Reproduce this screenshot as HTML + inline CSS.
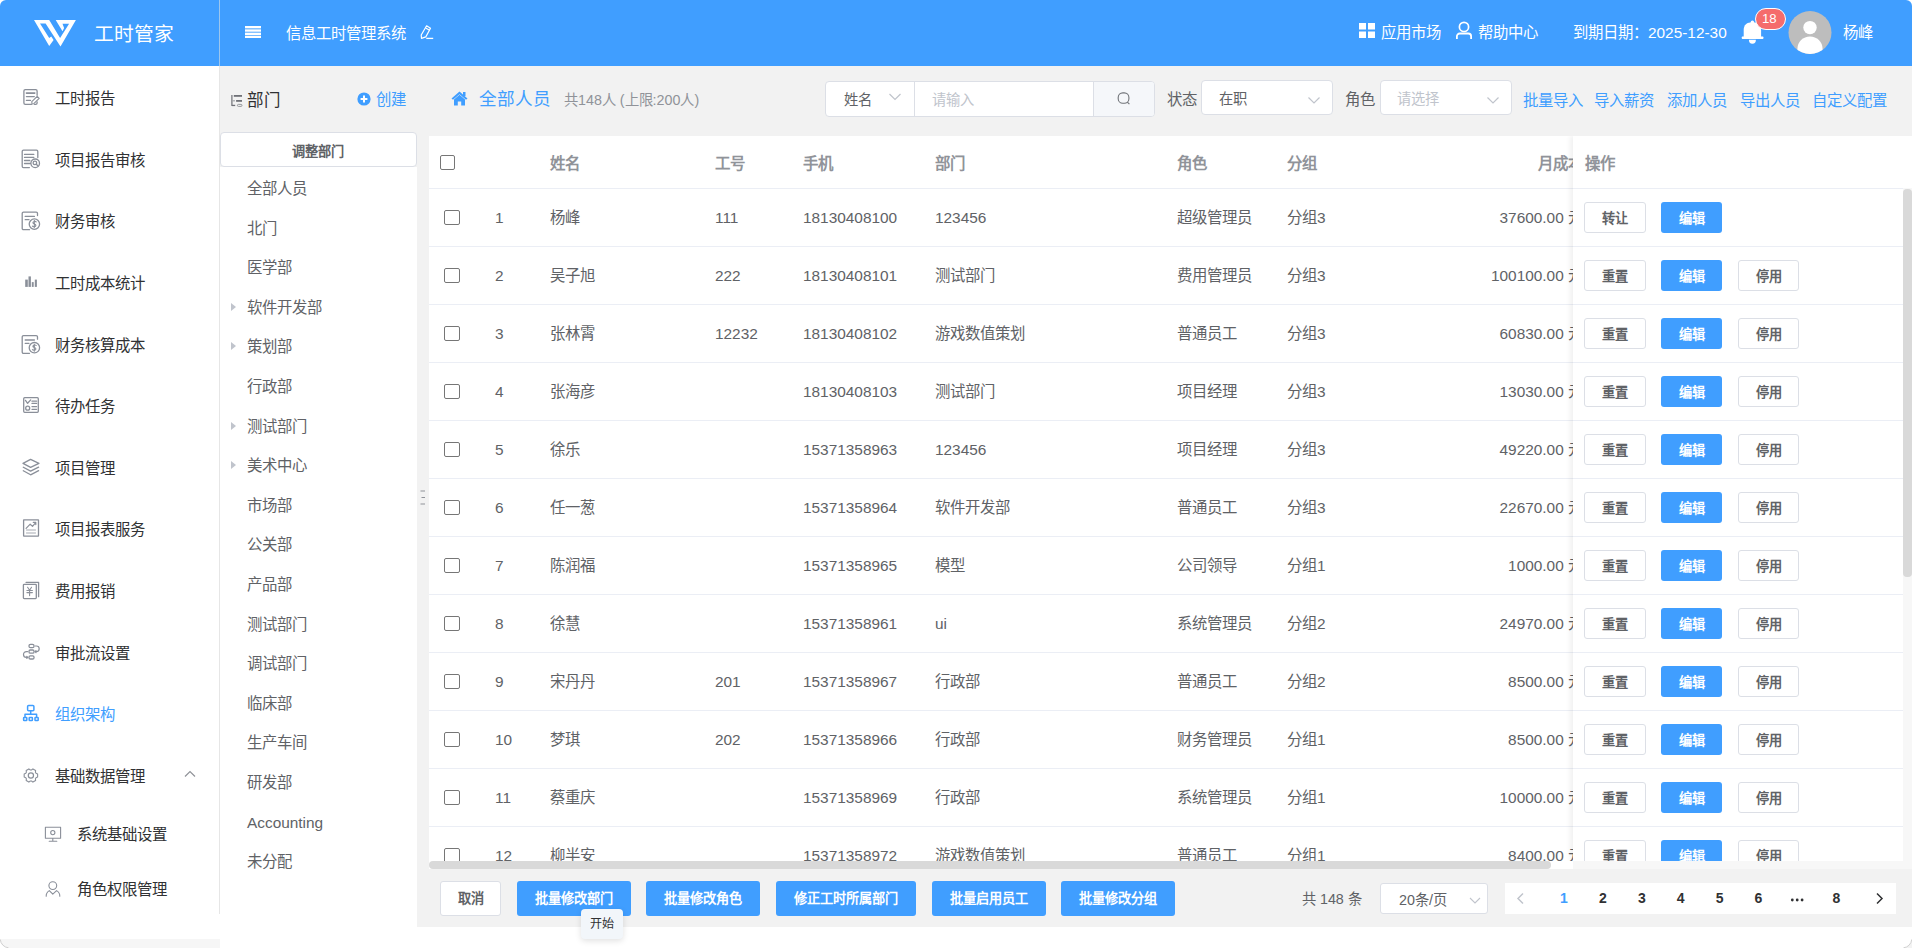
<!DOCTYPE html><html lang="zh-CN"><head><meta charset="utf-8"><title>工时管家</title><style>
*{box-sizing:border-box;margin:0;padding:0}
html,body{width:1912px;height:948px;overflow:hidden;background:#fff}
body{position:relative;font-family:"Liberation Sans",sans-serif;}
.t{position:absolute;white-space:nowrap}
.a{position:absolute}
</style></head><body>
<div class="a" style="left:0;top:0;width:1912px;height:66px;background:#409eff;border-radius:6px 6px 0 0"></div>
<svg class="a" style="left:0;top:0" width="100" height="66" viewBox="0 0 100 66"><g fill="#fff">
<path d="M34 20 L49.2 20 L60.1 38 L60.5 46.5 L45.6 23.6 L40 23.6 L49.2 38 L51.2 36.4 L53.6 40 L49.2 46.1 Z M55.7 20 L75.9 20 L60.5 46.5 L59.2 44 L60.1 38 L69.1 23.8 L62.5 23.8 L64.1 28 L62.5 31.2 Z"/>
</g></svg>
<div class="t" style="left:94px;top:25px;font-size:19.8px;line-height:19.8px;color:#fff;">工时管家</div>
<div class="a" style="left:219px;top:0;width:1px;height:66px;background:#9cc6ee"></div>
<svg class="a" style="left:245px;top:25px" width="16" height="14" viewBox="0 0 16 14"><rect x="0" y="1" width="16" height="12" fill="rgba(255,255,255,.3)"/><g fill="#fff"><rect x="0" y="1" width="16" height="2.1"/><rect x="0" y="4.5" width="16" height="2.1"/><rect x="0" y="7.9" width="16" height="2.1"/><rect x="0" y="11" width="16" height="2"/></g></svg>
<div class="t" style="left:286px;top:26px;font-size:15.4px;line-height:15.4px;color:#fff;">信息工时管理系统</div>
<svg class="a" style="left:410px;top:18px" width="30" height="28" viewBox="410 18 30 28"><g fill="none" stroke="#fff" stroke-width="1.2" stroke-linejoin="round"><path d="M426.6 25.8 L430.5 28.2 L425.8 36.9 L421.5 38.4 L421.2 35 Z"/><path d="M425.6 28 L429.6 30.2"/><path d="M426.3 38.4 H433.2" stroke-width="1.3"/></g></svg>
<svg class="a" style="left:1359px;top:23px" width="16" height="16" viewBox="0 0 16 16"><g fill="#fff">
<rect x="0" y="0" width="7" height="6.5"/><rect x="9" y="0" width="7" height="6.5"/><rect x="0" y="8.5" width="7" height="6.5"/><rect x="9" y="8.5" width="7" height="6.5"/></g></svg>
<div class="t" style="left:1381px;top:25px;font-size:15.4px;line-height:15.4px;color:#fff;">应用市场</div>
<svg class="a" style="left:1455px;top:21px" width="18" height="19" viewBox="0 0 18 19"><g fill="none" stroke="#fff" stroke-width="1.5">
<circle cx="9" cy="5.9" r="4.6" stroke-width="1.7"/><path d="M1.9 18 V15.3 A2.8 2.8 0 0 1 4.7 12.5 H13.3 A2.8 2.8 0 0 1 16.1 15.3 V18" stroke-width="1.8"/></g></svg>
<div class="t" style="left:1478px;top:25px;font-size:15.4px;line-height:15.4px;color:#fff;">帮助中心</div>
<div class="t" style="left:1573px;top:25px;font-size:15.4px;line-height:15.4px;color:#fff;">到期日期：2025-12-30</div>
<svg class="a" style="left:1740px;top:19px" width="25" height="26" viewBox="0 0 25 26"><g fill="#fff">
<circle cx="12.4" cy="3.3" r="1.7"/>
<path d="M3.7 18 V11 C3.7 6 6.8 3.3 12.4 3.3 C18 3.3 21.1 6 21.1 11 V18 Z"/>
<rect x="1.8" y="17.6" width="21.6" height="2.3" rx="0.6"/>
<path d="M8.9 20.8 H15.9 A3.5 3.9 0 0 1 8.9 20.8 Z"/></g></svg>
<div class="a" style="left:1755px;top:8px;width:31px;height:22px;border-radius:11px;background:#f56c6c;border:1px solid #fff"></div>
<div class="t" style="left:1762px;top:12px;font-size:13.2px;line-height:13.2px;color:#fff;">18</div>
<svg class="a" style="left:1788px;top:11px" width="44" height="44" viewBox="0 0 44 44">
<defs><clipPath id="av"><circle cx="22" cy="21.5" r="21.5"/></clipPath></defs>
<circle cx="22" cy="21.5" r="21.5" fill="#bdbdbd"/>
<g clip-path="url(#av)" fill="#fff"><circle cx="22" cy="16.6" r="6.7"/><ellipse cx="22" cy="38" rx="12.6" ry="12.6"/></g></svg>
<div class="t" style="left:1843px;top:25px;font-size:15.4px;line-height:15.4px;color:#fff;">杨峰</div>
<div class="a" style="left:0;top:66px;width:219px;height:848px;background:#fff"></div>
<div class="a" style="left:219px;top:66px;width:1px;height:848px;background:#e6e6e6"></div>
<div class="a" style="left:0;top:939px;width:220px;height:9px;background:#f6f6f6"></div>
<svg class="a" style="left:0;top:936px" width="12" height="12" viewBox="0 0 12 12"><path d="M0 0 V12 H9 A9 9 0 0 1 0 3 Z" fill="#fff"/><path d="M0.3 3.5 A9 9 0 0 0 8.5 11.8" fill="none" stroke="#d0d0d0" stroke-width="1"/></svg>
<div class="t" style="left:55px;top:91px;font-size:15.4px;line-height:15.4px;color:#303133;">工时报告</div>
<div class="t" style="left:55px;top:153px;font-size:15.4px;line-height:15.4px;color:#303133;">项目报告审核</div>
<div class="t" style="left:55px;top:214px;font-size:15.4px;line-height:15.4px;color:#303133;">财务审核</div>
<div class="t" style="left:55px;top:276px;font-size:15.4px;line-height:15.4px;color:#303133;">工时成本统计</div>
<div class="t" style="left:55px;top:338px;font-size:15.4px;line-height:15.4px;color:#303133;">财务核算成本</div>
<div class="t" style="left:55px;top:399px;font-size:15.4px;line-height:15.4px;color:#303133;">待办任务</div>
<div class="t" style="left:55px;top:461px;font-size:15.4px;line-height:15.4px;color:#303133;">项目管理</div>
<div class="t" style="left:55px;top:522px;font-size:15.4px;line-height:15.4px;color:#303133;">项目报表服务</div>
<div class="t" style="left:55px;top:584px;font-size:15.4px;line-height:15.4px;color:#303133;">费用报销</div>
<div class="t" style="left:55px;top:646px;font-size:15.4px;line-height:15.4px;color:#303133;">审批流设置</div>
<div class="t" style="left:55px;top:707px;font-size:15.4px;line-height:15.4px;color:#409eff;">组织架构</div>
<div class="t" style="left:55px;top:769px;font-size:15.4px;line-height:15.4px;color:#303133;">基础数据管理</div>
<svg class="a" style="left:0;top:0" width="219" height="948" viewBox="0 0 219 948"><g fill="none" stroke="#8a8f99" stroke-width="1.3" stroke-linecap="round" stroke-linejoin="round">
<path d="M37.1 95.3 V91 A1.4 1.4 0 0 0 35.7 89.6 H25.3 A1.4 1.4 0 0 0 23.9 91 V102.9 A1.4 1.4 0 0 0 25.3 104.3 H31.5 M37.1 101.8 V102.9 A1.4 1.4 0 0 1 35.7 104.3 H34.5"/>
<path d="M26.4 93.1 H34.8" stroke-width="1.6"/><path d="M26.4 96.6 H34.3"/><path d="M26.4 100.4 H30.5"/>
<path d="M32 104 L31.8 101.7 L37.2 96.3 L39.2 98.3 L33.8 103.7 Z" stroke-width="1.1"/>
<path d="M37.8 157.5 V151.5 A1.3 1.3 0 0 0 36.5 150.2 H23.5 A1.3 1.3 0 0 0 22.2 151.5 V166.3 A1.3 1.3 0 0 0 23.5 167.6 H29.4"/>
<path d="M24.5 154.4 H33.8 M24.5 157.4 H33.8 M24.5 160.5 H29.8 M24.5 163.5 H30.4"/>
<circle cx="35.2" cy="163.3" r="4.3"/><circle cx="34.9" cy="162.9" r="1.8"/><path d="M36.3 164.3 L37.8 165.8"/>
<path d="M37.5 215.6 V213.4 A1.3 1.3 0 0 0 36.2 212.1 H23.5 A1.3 1.3 0 0 0 22.2 213.4 V228.4 A1.3 1.3 0 0 0 23.5 229.7 H29.5"/>
<path d="M25.2 216.4 H34.4 M25.2 219.7 H29"/><circle cx="34.4" cy="224.1" r="5.2"/>
<path d="M36.2 221.9 C35.5 221.1 32.8 221.2 32.9 222.8 C33 224.2 36 223.7 35.9 225.4 C35.8 227 33.1 227 32.4 226.1 M34.3 220.6 V227.6" stroke-width="1.1"/>
<path d="M37.5 339.2 V337 A1.3 1.3 0 0 0 36.2 335.7 H23.5 A1.3 1.3 0 0 0 22.2 337 V352 A1.3 1.3 0 0 0 23.5 353.3 H29.5"/>
<path d="M25.2 340 H34.4 M25.2 343.3 H29"/><circle cx="34.4" cy="347.7" r="5.2"/>
<path d="M36.2 345.5 C35.5 344.7 32.8 344.8 32.9 346.4 C33 347.8 36 347.3 35.9 349 C35.8 350.6 33.1 350.6 32.4 349.7 M34.3 344.2 V351.2" stroke-width="1.1"/>
<rect x="23.7" y="397.7" width="14.6" height="14.6" rx="1"/>
<path d="M25.5 400.4 L27.6 403.3 L30.7 399.9"/><circle cx="27.7" cy="408.2" r="2"/>
<path d="M32 401.2 H36.6 M32 403.4 H36.6 M32 406.6 H36.6 M32 409.3 H36.6"/>
<path d="M30.6 459.4 L38.9 463.4 L30.6 467.4 L23 463.4 Z"/><path d="M23.3 467.2 L30.6 471.1 L38.6 467.2 M23.3 470.7 L30.6 474.8 L38.6 470.7"/>
<rect x="23.6" y="519.8" width="14.9" height="16.3" rx="0.3" stroke-linejoin="miter"/>
<path d="M26.1 528.4 L30.2 524.2 L32.5 526.4 L35.7 522.6 M33.3 522.4 H35.8 V524.6" stroke-width="1.2"/>
<path d="M26.1 529.9 H35.9 M26.1 532.9 H35.9" stroke="#c3c6cb" stroke-width="1.5" stroke-linecap="butt"/>
<path d="M26.1 582.4 H38.6 V596.7"/><rect x="23.4" y="584.3" width="12.9" height="14.3" rx="0.8"/>
<path d="M27.6 587.3 L29.6 590.2 L31.5 587.3 M26.9 590.5 H32.4 M26.9 592.6 H32.4 M29.6 590.2 V595.6" stroke-width="1.1"/>
<rect x="29" y="644.3" width="5" height="3.4" rx="1.5"/><rect x="29" y="650" width="5" height="3.2" rx="1.3"/><rect x="29" y="655.8" width="5" height="3.2" rx="1.3"/>
<path d="M35.3 646 H36.4 A2.8 2.8 0 0 1 36.4 651.6 H35 M36 650.6 L35 651.6 L36 652.6" stroke-width="1.2"/>
<path d="M27.6 651.6 H26.4 A2.9 2.9 0 0 0 26.4 657.4 H27.6 M26.8 656.4 L27.8 657.4 L26.8 658.4" stroke-width="1.2"/>
<circle cx="30.9" cy="775.5" r="2.6" stroke-width="1.2"/>
<path d="M36.02 773.22 L37.62 773.95 L37.62 777.05 L36.02 777.78 L35.43 778.79 L35.61 780.55 L32.92 782.10 L31.49 781.07 L30.31 781.07 L28.88 782.10 L26.19 780.55 L26.37 778.79 L25.78 777.78 L24.18 777.05 L24.18 773.95 L25.78 773.22 L26.37 772.21 L26.19 770.45 L28.88 768.90 L30.31 769.93 L31.49 769.93 L32.92 768.90 L35.61 770.45 L35.43 772.21 Z" stroke-width="1.1"/>
<path d="M45.4 827.3 H60.6 V838.2 H45.4 Z M52.8 838.2 V841.2 M49.2 841.3 H56.8" stroke-width="1.1"/>
<circle cx="52.8" cy="832.6" r="2.1" stroke-width="1.1"/>
<circle cx="52.8" cy="885.6" r="3.9" stroke-width="1.1"/>
<path d="M46.2 896.3 A7.2 6.5 0 0 1 49.3 890.6 L52.8 894.2 L56.6 890.6 A7.2 6.5 0 0 1 59.8 896.3" stroke-width="1.1"/>
</g>
<g fill="#8a8f99"><rect x="25.2" y="279.6" width="2.6" height="7.3"/><rect x="28.5" y="276.4" width="2.4" height="10.5"/><rect x="31.8" y="282.1" width="1.9" height="4.8"/><rect x="34.8" y="279.6" width="2.1" height="7.3"/></g>
<g fill="none" stroke="#409eff" stroke-width="1.5" stroke-linejoin="round">
<rect x="27.6" y="705.5" width="6.3" height="5.2" rx="1"/><path d="M30.7 710.7 V714.3 M25 717.4 V714.3 H36.6 V717.4"/>
<rect x="23.6" y="717.5" width="3.2" height="3" rx="0.6"/><rect x="29.2" y="717.5" width="3.2" height="3" rx="0.6"/><rect x="35" y="717.5" width="3.2" height="3" rx="0.6"/>
</g></svg>
<svg class="a" style="left:184px;top:770px" width="12" height="8" viewBox="0 0 12 8"><path d="M1 6.5 L6 1.5 L11 6.5" fill="none" stroke="#909399" stroke-width="1.2"/></svg>
<div class="t" style="left:77px;top:827px;font-size:15.4px;line-height:15.4px;color:#303133;">系统基础设置</div>
<div class="t" style="left:77px;top:882px;font-size:15.4px;line-height:15.4px;color:#303133;">角色权限管理</div>
<div class="a" style="left:220px;top:66px;width:1692px;height:861px;background:#f2f2f2"></div>
<svg class="a" style="left:226px;top:88px" width="20" height="22" viewBox="226 88 20 22"><g fill="#6f7177"><rect x="231.3" y="95" width="1.2" height="11"/><rect x="233.8" y="95" width="8.2" height="1.8"/><rect x="236.1" y="100" width="5.9" height="1.8"/><rect x="232" y="100.2" width="3" height="1.2" fill="#a5a7ab"/><rect x="232" y="104.8" width="3.2" height="1.3"/></g><rect x="237.4" y="104.4" width="4.6" height="2" rx="1" fill="none" stroke="#8c8e93" stroke-width="0.9"/></svg>
<div class="t" style="left:247px;top:92px;font-size:16.5px;line-height:16.5px;color:#303133;">部门</div>
<svg class="a" style="left:357px;top:92px" width="14" height="14" viewBox="0 0 14 14"><circle cx="7" cy="7" r="6.6" fill="#409eff"/><path d="M7 3.6 V10.4 M3.6 7 H10.4" stroke="#fff" stroke-width="2"/></svg>
<div class="t" style="left:376px;top:92px;font-size:15.4px;line-height:15.4px;color:#409eff;">创建</div>
<div class="a" style="left:220px;top:132px;width:197px;height:35px;background:#fff;border:1px solid #dcdfe6;border-radius:4px"></div>
<div class="t" style="left:292px;top:145px;font-size:13.2px;line-height:13.2px;color:#606266;font-weight:bold;">调整部门</div>
<div class="a" style="left:220px;top:167px;width:197px;height:781px;background:#fff"></div>
<div class="t" style="left:247px;top:181px;font-size:15.4px;line-height:15.4px;color:#606266;">全部人员</div>
<div class="t" style="left:247px;top:221px;font-size:15.4px;line-height:15.4px;color:#606266;">北门</div>
<div class="t" style="left:247px;top:260px;font-size:15.4px;line-height:15.4px;color:#606266;">医学部</div>
<div class="t" style="left:247px;top:300px;font-size:15.4px;line-height:15.4px;color:#606266;">软件开发部</div>
<div class="a" style="left:231px;top:303px;width:0;height:0;border-top:4px solid transparent;border-bottom:4px solid transparent;border-left:5px solid #c0c4cc"></div>
<div class="t" style="left:247px;top:339px;font-size:15.4px;line-height:15.4px;color:#606266;">策划部</div>
<div class="a" style="left:231px;top:342px;width:0;height:0;border-top:4px solid transparent;border-bottom:4px solid transparent;border-left:5px solid #c0c4cc"></div>
<div class="t" style="left:247px;top:379px;font-size:15.4px;line-height:15.4px;color:#606266;">行政部</div>
<div class="t" style="left:247px;top:419px;font-size:15.4px;line-height:15.4px;color:#606266;">测试部门</div>
<div class="a" style="left:231px;top:422px;width:0;height:0;border-top:4px solid transparent;border-bottom:4px solid transparent;border-left:5px solid #c0c4cc"></div>
<div class="t" style="left:247px;top:458px;font-size:15.4px;line-height:15.4px;color:#606266;">美术中心</div>
<div class="a" style="left:231px;top:461px;width:0;height:0;border-top:4px solid transparent;border-bottom:4px solid transparent;border-left:5px solid #c0c4cc"></div>
<div class="t" style="left:247px;top:498px;font-size:15.4px;line-height:15.4px;color:#606266;">市场部</div>
<div class="t" style="left:247px;top:537px;font-size:15.4px;line-height:15.4px;color:#606266;">公关部</div>
<div class="t" style="left:247px;top:577px;font-size:15.4px;line-height:15.4px;color:#606266;">产品部</div>
<div class="t" style="left:247px;top:617px;font-size:15.4px;line-height:15.4px;color:#606266;">测试部门</div>
<div class="t" style="left:247px;top:656px;font-size:15.4px;line-height:15.4px;color:#606266;">调试部门</div>
<div class="t" style="left:247px;top:696px;font-size:15.4px;line-height:15.4px;color:#606266;">临床部</div>
<div class="t" style="left:247px;top:735px;font-size:15.4px;line-height:15.4px;color:#606266;">生产车间</div>
<div class="t" style="left:247px;top:775px;font-size:15.4px;line-height:15.4px;color:#606266;">研发部</div>
<div class="t" style="left:247px;top:815px;font-size:15.4px;line-height:15.4px;color:#606266;">Accounting</div>
<div class="t" style="left:247px;top:854px;font-size:15.4px;line-height:15.4px;color:#606266;">未分配</div>
<svg class="a" style="left:420px;top:490px" width="6" height="15" viewBox="0 0 6 15"><path d="M0.5 1 H5 M1.5 7.5 H5 M0.5 14 H5" stroke="#909399" stroke-width="1"/></svg>
<svg class="a" style="left:451px;top:91px" width="17" height="15" viewBox="0 0 17 15"><g fill="#409eff"><path d="M8.5 0.5 L0.5 7.5 L2 8.8 L8.5 3.2 L15 8.8 L16.5 7.5 Z"/><rect x="12" y="1" width="2.5" height="4"/><path d="M3 8.5 L8.5 3.8 L14 8.5 V14.5 H10.2 V10.5 H6.8 V14.5 H3 Z"/></g></svg>
<div class="t" style="left:479px;top:91px;font-size:17.6px;line-height:17.6px;color:#409eff;">全部人员</div>
<div class="t" style="left:564px;top:93px;font-size:14.3px;line-height:14.3px;color:#909399;">共148人 (上限:200人)</div>
<div class="a" style="left:825px;top:81px;width:330px;height:36px;background:#fff;border:1px solid #dcdfe6;border-radius:4px"></div>
<div class="a" style="left:1093px;top:82px;width:61px;height:34px;background:#f5f7fa;border-left:1px solid #dcdfe6;border-radius:0 3px 3px 0"></div>
<div class="a" style="left:914px;top:82px;width:1px;height:34px;background:#dcdfe6"></div>
<div class="t" style="left:844px;top:93px;font-size:14.3px;line-height:14.3px;color:#606266;">姓名</div>
<svg class="a" style="left:888px;top:92px" width="14" height="10" viewBox="0 0 14 10"><path d="M1.5 2 L7 7.5 L12.5 2" fill="none" stroke="#c0c4cc" stroke-width="1.2"/></svg>
<div class="t" style="left:932px;top:93px;font-size:14.3px;line-height:14.3px;color:#c0c4cc;">请输入</div>
<svg class="a" style="left:1110px;top:85px" width="25" height="25" viewBox="1110 85 25 25"><g fill="none" stroke="#707378" stroke-width="1.1"><rect x="1118.2" y="92.9" width="10.7" height="10.4" rx="4.6"/><path d="M1127.3 102.1 L1129.4 104.2"/></g></svg>
<div class="t" style="left:1167px;top:92px;font-size:15.4px;line-height:15.4px;color:#606266;">状态</div>
<div class="a" style="left:1201px;top:80px;width:132px;height:35px;background:#fff;border:1px solid #dcdfe6;border-radius:4px"></div>
<div class="t" style="left:1219px;top:92px;font-size:14.3px;line-height:14.3px;color:#606266;">在职</div>
<svg class="a" style="left:1307px;top:95px" width="14" height="10" viewBox="0 0 14 10"><path d="M1.5 2.5 L7 8 L12.5 2.5" fill="none" stroke="#c0c4cc" stroke-width="1.2"/></svg>
<div class="t" style="left:1345px;top:92px;font-size:15.4px;line-height:15.4px;color:#606266;">角色</div>
<div class="a" style="left:1380px;top:80px;width:132px;height:35px;background:#fff;border:1px solid #dcdfe6;border-radius:4px"></div>
<div class="t" style="left:1397px;top:92px;font-size:14.3px;line-height:14.3px;color:#c0c4cc;">请选择</div>
<svg class="a" style="left:1486px;top:95px" width="14" height="10" viewBox="0 0 14 10"><path d="M1.5 2.5 L7 8 L12.5 2.5" fill="none" stroke="#c0c4cc" stroke-width="1.2"/></svg>
<div class="t" style="left:1523px;top:93px;font-size:15.4px;line-height:15.4px;color:#409eff;">批量导入</div>
<div class="t" style="left:1594px;top:93px;font-size:15.4px;line-height:15.4px;color:#409eff;">导入薪资</div>
<div class="t" style="left:1667px;top:93px;font-size:15.4px;line-height:15.4px;color:#409eff;">添加人员</div>
<div class="t" style="left:1740px;top:93px;font-size:15.4px;line-height:15.4px;color:#409eff;">导出人员</div>
<div class="t" style="left:1812px;top:93px;font-size:15.4px;line-height:15.4px;color:#409eff;">自定义配置</div>
<div class="a" style="left:429px;top:136px;width:1483px;height:733px;background:#fff;overflow:hidden">
<div class="a" style="left:11px;top:19px;width:15px;height:15px;border:1px solid #767676;border-radius:2px;background:#fff"></div>
<div class="t" style="left:121px;top:20px;font-size:15.4px;line-height:15.4px;color:#909399;font-weight:bold;">姓名</div>
<div class="t" style="left:286px;top:20px;font-size:15.4px;line-height:15.4px;color:#909399;font-weight:bold;">工号</div>
<div class="t" style="left:374px;top:20px;font-size:15.4px;line-height:15.4px;color:#909399;font-weight:bold;">手机</div>
<div class="t" style="left:506px;top:20px;font-size:15.4px;line-height:15.4px;color:#909399;font-weight:bold;">部门</div>
<div class="t" style="left:748px;top:20px;font-size:15.4px;line-height:15.4px;color:#909399;font-weight:bold;">角色</div>
<div class="t" style="left:858px;top:20px;font-size:15.4px;line-height:15.4px;color:#909399;font-weight:bold;">分组</div>
<div class="t" style="left:1109px;top:20px;font-size:15.4px;line-height:15.4px;color:#909399;font-weight:bold;">月成本</div>
<div class="a" style="left:0;top:52px;width:1483px;height:1px;background:#ebeef5"></div>
<div class="a" style="left:15px;top:74px;width:16px;height:15px;border:1px solid #767676;border-radius:2px;background:#fff"></div>
<div class="t" style="left:66px;top:74px;font-size:15.4px;line-height:15.4px;color:#606266;">1</div>
<div class="t" style="left:121px;top:74px;font-size:15.4px;line-height:15.4px;color:#606266;">杨峰</div>
<div class="t" style="left:286px;top:74px;font-size:15.4px;line-height:15.4px;color:#606266;">111</div>
<div class="t" style="left:374px;top:74px;font-size:15.4px;line-height:15.4px;color:#606266;">18130408100</div>
<div class="t" style="left:506px;top:74px;font-size:15.4px;line-height:15.4px;color:#606266;">123456</div>
<div class="t" style="left:748px;top:74px;font-size:15.4px;line-height:15.4px;color:#606266;">超级管理员</div>
<div class="t" style="left:858px;top:74px;font-size:15.4px;line-height:15.4px;color:#606266;">分组3</div>
<div class="t" style="right:329px;top:74px;font-size:15.4px;line-height:15.4px;color:#606266">37600.00 元</div>
<div class="a" style="left:0;top:110px;width:1483px;height:1px;background:#ebeef5"></div>
<div class="a" style="left:15px;top:132px;width:16px;height:15px;border:1px solid #767676;border-radius:2px;background:#fff"></div>
<div class="t" style="left:66px;top:132px;font-size:15.4px;line-height:15.4px;color:#606266;">2</div>
<div class="t" style="left:121px;top:132px;font-size:15.4px;line-height:15.4px;color:#606266;">吴子旭</div>
<div class="t" style="left:286px;top:132px;font-size:15.4px;line-height:15.4px;color:#606266;">222</div>
<div class="t" style="left:374px;top:132px;font-size:15.4px;line-height:15.4px;color:#606266;">18130408101</div>
<div class="t" style="left:506px;top:132px;font-size:15.4px;line-height:15.4px;color:#606266;">测试部门</div>
<div class="t" style="left:748px;top:132px;font-size:15.4px;line-height:15.4px;color:#606266;">费用管理员</div>
<div class="t" style="left:858px;top:132px;font-size:15.4px;line-height:15.4px;color:#606266;">分组3</div>
<div class="t" style="right:329px;top:132px;font-size:15.4px;line-height:15.4px;color:#606266">100100.00 元</div>
<div class="a" style="left:0;top:168px;width:1483px;height:1px;background:#ebeef5"></div>
<div class="a" style="left:15px;top:190px;width:16px;height:15px;border:1px solid #767676;border-radius:2px;background:#fff"></div>
<div class="t" style="left:66px;top:190px;font-size:15.4px;line-height:15.4px;color:#606266;">3</div>
<div class="t" style="left:121px;top:190px;font-size:15.4px;line-height:15.4px;color:#606266;">张林霄</div>
<div class="t" style="left:286px;top:190px;font-size:15.4px;line-height:15.4px;color:#606266;">12232</div>
<div class="t" style="left:374px;top:190px;font-size:15.4px;line-height:15.4px;color:#606266;">18130408102</div>
<div class="t" style="left:506px;top:190px;font-size:15.4px;line-height:15.4px;color:#606266;">游戏数值策划</div>
<div class="t" style="left:748px;top:190px;font-size:15.4px;line-height:15.4px;color:#606266;">普通员工</div>
<div class="t" style="left:858px;top:190px;font-size:15.4px;line-height:15.4px;color:#606266;">分组3</div>
<div class="t" style="right:329px;top:190px;font-size:15.4px;line-height:15.4px;color:#606266">60830.00 元</div>
<div class="a" style="left:0;top:226px;width:1483px;height:1px;background:#ebeef5"></div>
<div class="a" style="left:15px;top:248px;width:16px;height:15px;border:1px solid #767676;border-radius:2px;background:#fff"></div>
<div class="t" style="left:66px;top:248px;font-size:15.4px;line-height:15.4px;color:#606266;">4</div>
<div class="t" style="left:121px;top:248px;font-size:15.4px;line-height:15.4px;color:#606266;">张海彦</div>
<div class="t" style="left:286px;top:248px;font-size:15.4px;line-height:15.4px;color:#606266;"></div>
<div class="t" style="left:374px;top:248px;font-size:15.4px;line-height:15.4px;color:#606266;">18130408103</div>
<div class="t" style="left:506px;top:248px;font-size:15.4px;line-height:15.4px;color:#606266;">测试部门</div>
<div class="t" style="left:748px;top:248px;font-size:15.4px;line-height:15.4px;color:#606266;">项目经理</div>
<div class="t" style="left:858px;top:248px;font-size:15.4px;line-height:15.4px;color:#606266;">分组3</div>
<div class="t" style="right:329px;top:248px;font-size:15.4px;line-height:15.4px;color:#606266">13030.00 元</div>
<div class="a" style="left:0;top:284px;width:1483px;height:1px;background:#ebeef5"></div>
<div class="a" style="left:15px;top:306px;width:16px;height:15px;border:1px solid #767676;border-radius:2px;background:#fff"></div>
<div class="t" style="left:66px;top:306px;font-size:15.4px;line-height:15.4px;color:#606266;">5</div>
<div class="t" style="left:121px;top:306px;font-size:15.4px;line-height:15.4px;color:#606266;">徐乐</div>
<div class="t" style="left:286px;top:306px;font-size:15.4px;line-height:15.4px;color:#606266;"></div>
<div class="t" style="left:374px;top:306px;font-size:15.4px;line-height:15.4px;color:#606266;">15371358963</div>
<div class="t" style="left:506px;top:306px;font-size:15.4px;line-height:15.4px;color:#606266;">123456</div>
<div class="t" style="left:748px;top:306px;font-size:15.4px;line-height:15.4px;color:#606266;">项目经理</div>
<div class="t" style="left:858px;top:306px;font-size:15.4px;line-height:15.4px;color:#606266;">分组3</div>
<div class="t" style="right:329px;top:306px;font-size:15.4px;line-height:15.4px;color:#606266">49220.00 元</div>
<div class="a" style="left:0;top:342px;width:1483px;height:1px;background:#ebeef5"></div>
<div class="a" style="left:15px;top:364px;width:16px;height:15px;border:1px solid #767676;border-radius:2px;background:#fff"></div>
<div class="t" style="left:66px;top:364px;font-size:15.4px;line-height:15.4px;color:#606266;">6</div>
<div class="t" style="left:121px;top:364px;font-size:15.4px;line-height:15.4px;color:#606266;">任一葱</div>
<div class="t" style="left:286px;top:364px;font-size:15.4px;line-height:15.4px;color:#606266;"></div>
<div class="t" style="left:374px;top:364px;font-size:15.4px;line-height:15.4px;color:#606266;">15371358964</div>
<div class="t" style="left:506px;top:364px;font-size:15.4px;line-height:15.4px;color:#606266;">软件开发部</div>
<div class="t" style="left:748px;top:364px;font-size:15.4px;line-height:15.4px;color:#606266;">普通员工</div>
<div class="t" style="left:858px;top:364px;font-size:15.4px;line-height:15.4px;color:#606266;">分组3</div>
<div class="t" style="right:329px;top:364px;font-size:15.4px;line-height:15.4px;color:#606266">22670.00 元</div>
<div class="a" style="left:0;top:400px;width:1483px;height:1px;background:#ebeef5"></div>
<div class="a" style="left:15px;top:422px;width:16px;height:15px;border:1px solid #767676;border-radius:2px;background:#fff"></div>
<div class="t" style="left:66px;top:422px;font-size:15.4px;line-height:15.4px;color:#606266;">7</div>
<div class="t" style="left:121px;top:422px;font-size:15.4px;line-height:15.4px;color:#606266;">陈润福</div>
<div class="t" style="left:286px;top:422px;font-size:15.4px;line-height:15.4px;color:#606266;"></div>
<div class="t" style="left:374px;top:422px;font-size:15.4px;line-height:15.4px;color:#606266;">15371358965</div>
<div class="t" style="left:506px;top:422px;font-size:15.4px;line-height:15.4px;color:#606266;">模型</div>
<div class="t" style="left:748px;top:422px;font-size:15.4px;line-height:15.4px;color:#606266;">公司领导</div>
<div class="t" style="left:858px;top:422px;font-size:15.4px;line-height:15.4px;color:#606266;">分组1</div>
<div class="t" style="right:329px;top:422px;font-size:15.4px;line-height:15.4px;color:#606266">1000.00 元</div>
<div class="a" style="left:0;top:458px;width:1483px;height:1px;background:#ebeef5"></div>
<div class="a" style="left:15px;top:480px;width:16px;height:15px;border:1px solid #767676;border-radius:2px;background:#fff"></div>
<div class="t" style="left:66px;top:480px;font-size:15.4px;line-height:15.4px;color:#606266;">8</div>
<div class="t" style="left:121px;top:480px;font-size:15.4px;line-height:15.4px;color:#606266;">徐慧</div>
<div class="t" style="left:286px;top:480px;font-size:15.4px;line-height:15.4px;color:#606266;"></div>
<div class="t" style="left:374px;top:480px;font-size:15.4px;line-height:15.4px;color:#606266;">15371358961</div>
<div class="t" style="left:506px;top:480px;font-size:15.4px;line-height:15.4px;color:#606266;">ui</div>
<div class="t" style="left:748px;top:480px;font-size:15.4px;line-height:15.4px;color:#606266;">系统管理员</div>
<div class="t" style="left:858px;top:480px;font-size:15.4px;line-height:15.4px;color:#606266;">分组2</div>
<div class="t" style="right:329px;top:480px;font-size:15.4px;line-height:15.4px;color:#606266">24970.00 元</div>
<div class="a" style="left:0;top:516px;width:1483px;height:1px;background:#ebeef5"></div>
<div class="a" style="left:15px;top:538px;width:16px;height:15px;border:1px solid #767676;border-radius:2px;background:#fff"></div>
<div class="t" style="left:66px;top:538px;font-size:15.4px;line-height:15.4px;color:#606266;">9</div>
<div class="t" style="left:121px;top:538px;font-size:15.4px;line-height:15.4px;color:#606266;">宋丹丹</div>
<div class="t" style="left:286px;top:538px;font-size:15.4px;line-height:15.4px;color:#606266;">201</div>
<div class="t" style="left:374px;top:538px;font-size:15.4px;line-height:15.4px;color:#606266;">15371358967</div>
<div class="t" style="left:506px;top:538px;font-size:15.4px;line-height:15.4px;color:#606266;">行政部</div>
<div class="t" style="left:748px;top:538px;font-size:15.4px;line-height:15.4px;color:#606266;">普通员工</div>
<div class="t" style="left:858px;top:538px;font-size:15.4px;line-height:15.4px;color:#606266;">分组2</div>
<div class="t" style="right:329px;top:538px;font-size:15.4px;line-height:15.4px;color:#606266">8500.00 元</div>
<div class="a" style="left:0;top:574px;width:1483px;height:1px;background:#ebeef5"></div>
<div class="a" style="left:15px;top:596px;width:16px;height:15px;border:1px solid #767676;border-radius:2px;background:#fff"></div>
<div class="t" style="left:66px;top:596px;font-size:15.4px;line-height:15.4px;color:#606266;">10</div>
<div class="t" style="left:121px;top:596px;font-size:15.4px;line-height:15.4px;color:#606266;">梦琪</div>
<div class="t" style="left:286px;top:596px;font-size:15.4px;line-height:15.4px;color:#606266;">202</div>
<div class="t" style="left:374px;top:596px;font-size:15.4px;line-height:15.4px;color:#606266;">15371358966</div>
<div class="t" style="left:506px;top:596px;font-size:15.4px;line-height:15.4px;color:#606266;">行政部</div>
<div class="t" style="left:748px;top:596px;font-size:15.4px;line-height:15.4px;color:#606266;">财务管理员</div>
<div class="t" style="left:858px;top:596px;font-size:15.4px;line-height:15.4px;color:#606266;">分组1</div>
<div class="t" style="right:329px;top:596px;font-size:15.4px;line-height:15.4px;color:#606266">8500.00 元</div>
<div class="a" style="left:0;top:632px;width:1483px;height:1px;background:#ebeef5"></div>
<div class="a" style="left:15px;top:654px;width:16px;height:15px;border:1px solid #767676;border-radius:2px;background:#fff"></div>
<div class="t" style="left:66px;top:654px;font-size:15.4px;line-height:15.4px;color:#606266;">11</div>
<div class="t" style="left:121px;top:654px;font-size:15.4px;line-height:15.4px;color:#606266;">蔡重庆</div>
<div class="t" style="left:286px;top:654px;font-size:15.4px;line-height:15.4px;color:#606266;"></div>
<div class="t" style="left:374px;top:654px;font-size:15.4px;line-height:15.4px;color:#606266;">15371358969</div>
<div class="t" style="left:506px;top:654px;font-size:15.4px;line-height:15.4px;color:#606266;">行政部</div>
<div class="t" style="left:748px;top:654px;font-size:15.4px;line-height:15.4px;color:#606266;">系统管理员</div>
<div class="t" style="left:858px;top:654px;font-size:15.4px;line-height:15.4px;color:#606266;">分组1</div>
<div class="t" style="right:329px;top:654px;font-size:15.4px;line-height:15.4px;color:#606266">10000.00 元</div>
<div class="a" style="left:0;top:690px;width:1483px;height:1px;background:#ebeef5"></div>
<div class="a" style="left:15px;top:712px;width:16px;height:15px;border:1px solid #767676;border-radius:2px;background:#fff"></div>
<div class="t" style="left:66px;top:712px;font-size:15.4px;line-height:15.4px;color:#606266;">12</div>
<div class="t" style="left:121px;top:712px;font-size:15.4px;line-height:15.4px;color:#606266;">柳半安</div>
<div class="t" style="left:286px;top:712px;font-size:15.4px;line-height:15.4px;color:#606266;"></div>
<div class="t" style="left:374px;top:712px;font-size:15.4px;line-height:15.4px;color:#606266;">15371358972</div>
<div class="t" style="left:506px;top:712px;font-size:15.4px;line-height:15.4px;color:#606266;">游戏数值策划</div>
<div class="t" style="left:748px;top:712px;font-size:15.4px;line-height:15.4px;color:#606266;">普通员工</div>
<div class="t" style="left:858px;top:712px;font-size:15.4px;line-height:15.4px;color:#606266;">分组1</div>
<div class="t" style="right:329px;top:712px;font-size:15.4px;line-height:15.4px;color:#606266">8400.00 元</div>
<div class="a" style="left:0;top:748px;width:1483px;height:1px;background:#ebeef5"></div>
<div class="a" style="left:1144px;top:0;width:339px;height:725px;background:#fff;box-shadow:-3px 0 5px rgba(0,0,0,.06)">
<div class="t" style="left:12px;top:20px;font-size:15.4px;line-height:15.4px;color:#909399;font-weight:bold;">操作</div>
<div class="a" style="left:0;top:52px;width:339px;height:1px;background:#ebeef5"></div>
<div class="a" style="left:11px;top:66px;width:62px;height:31px;background:#fff;border:1px solid #dcdfe6;border-radius:3px;color:#606266;font-size:13.2px;font-weight:bold;line-height:31px;text-align:center">转让</div>
<div class="a" style="left:88px;top:66px;width:61px;height:31px;background:#409eff;border-radius:3px;color:#fff;font-size:13.2px;font-weight:bold;line-height:33px;text-align:center">编辑</div>
<div class="a" style="left:0;top:110px;width:330px;height:1px;background:#ebeef5"></div>
<div class="a" style="left:11px;top:124px;width:62px;height:31px;background:#fff;border:1px solid #dcdfe6;border-radius:3px;color:#606266;font-size:13.2px;font-weight:bold;line-height:31px;text-align:center">重置</div>
<div class="a" style="left:88px;top:124px;width:61px;height:31px;background:#409eff;border-radius:3px;color:#fff;font-size:13.2px;font-weight:bold;line-height:33px;text-align:center">编辑</div>
<div class="a" style="left:165px;top:124px;width:61px;height:31px;background:#fff;border:1px solid #dcdfe6;border-radius:3px;color:#606266;font-size:13.2px;font-weight:bold;line-height:31px;text-align:center">停用</div>
<div class="a" style="left:0;top:168px;width:330px;height:1px;background:#ebeef5"></div>
<div class="a" style="left:11px;top:182px;width:62px;height:31px;background:#fff;border:1px solid #dcdfe6;border-radius:3px;color:#606266;font-size:13.2px;font-weight:bold;line-height:31px;text-align:center">重置</div>
<div class="a" style="left:88px;top:182px;width:61px;height:31px;background:#409eff;border-radius:3px;color:#fff;font-size:13.2px;font-weight:bold;line-height:33px;text-align:center">编辑</div>
<div class="a" style="left:165px;top:182px;width:61px;height:31px;background:#fff;border:1px solid #dcdfe6;border-radius:3px;color:#606266;font-size:13.2px;font-weight:bold;line-height:31px;text-align:center">停用</div>
<div class="a" style="left:0;top:226px;width:330px;height:1px;background:#ebeef5"></div>
<div class="a" style="left:11px;top:240px;width:62px;height:31px;background:#fff;border:1px solid #dcdfe6;border-radius:3px;color:#606266;font-size:13.2px;font-weight:bold;line-height:31px;text-align:center">重置</div>
<div class="a" style="left:88px;top:240px;width:61px;height:31px;background:#409eff;border-radius:3px;color:#fff;font-size:13.2px;font-weight:bold;line-height:33px;text-align:center">编辑</div>
<div class="a" style="left:165px;top:240px;width:61px;height:31px;background:#fff;border:1px solid #dcdfe6;border-radius:3px;color:#606266;font-size:13.2px;font-weight:bold;line-height:31px;text-align:center">停用</div>
<div class="a" style="left:0;top:284px;width:330px;height:1px;background:#ebeef5"></div>
<div class="a" style="left:11px;top:298px;width:62px;height:31px;background:#fff;border:1px solid #dcdfe6;border-radius:3px;color:#606266;font-size:13.2px;font-weight:bold;line-height:31px;text-align:center">重置</div>
<div class="a" style="left:88px;top:298px;width:61px;height:31px;background:#409eff;border-radius:3px;color:#fff;font-size:13.2px;font-weight:bold;line-height:33px;text-align:center">编辑</div>
<div class="a" style="left:165px;top:298px;width:61px;height:31px;background:#fff;border:1px solid #dcdfe6;border-radius:3px;color:#606266;font-size:13.2px;font-weight:bold;line-height:31px;text-align:center">停用</div>
<div class="a" style="left:0;top:342px;width:330px;height:1px;background:#ebeef5"></div>
<div class="a" style="left:11px;top:356px;width:62px;height:31px;background:#fff;border:1px solid #dcdfe6;border-radius:3px;color:#606266;font-size:13.2px;font-weight:bold;line-height:31px;text-align:center">重置</div>
<div class="a" style="left:88px;top:356px;width:61px;height:31px;background:#409eff;border-radius:3px;color:#fff;font-size:13.2px;font-weight:bold;line-height:33px;text-align:center">编辑</div>
<div class="a" style="left:165px;top:356px;width:61px;height:31px;background:#fff;border:1px solid #dcdfe6;border-radius:3px;color:#606266;font-size:13.2px;font-weight:bold;line-height:31px;text-align:center">停用</div>
<div class="a" style="left:0;top:400px;width:330px;height:1px;background:#ebeef5"></div>
<div class="a" style="left:11px;top:414px;width:62px;height:31px;background:#fff;border:1px solid #dcdfe6;border-radius:3px;color:#606266;font-size:13.2px;font-weight:bold;line-height:31px;text-align:center">重置</div>
<div class="a" style="left:88px;top:414px;width:61px;height:31px;background:#409eff;border-radius:3px;color:#fff;font-size:13.2px;font-weight:bold;line-height:33px;text-align:center">编辑</div>
<div class="a" style="left:165px;top:414px;width:61px;height:31px;background:#fff;border:1px solid #dcdfe6;border-radius:3px;color:#606266;font-size:13.2px;font-weight:bold;line-height:31px;text-align:center">停用</div>
<div class="a" style="left:0;top:458px;width:330px;height:1px;background:#ebeef5"></div>
<div class="a" style="left:11px;top:472px;width:62px;height:31px;background:#fff;border:1px solid #dcdfe6;border-radius:3px;color:#606266;font-size:13.2px;font-weight:bold;line-height:31px;text-align:center">重置</div>
<div class="a" style="left:88px;top:472px;width:61px;height:31px;background:#409eff;border-radius:3px;color:#fff;font-size:13.2px;font-weight:bold;line-height:33px;text-align:center">编辑</div>
<div class="a" style="left:165px;top:472px;width:61px;height:31px;background:#fff;border:1px solid #dcdfe6;border-radius:3px;color:#606266;font-size:13.2px;font-weight:bold;line-height:31px;text-align:center">停用</div>
<div class="a" style="left:0;top:516px;width:330px;height:1px;background:#ebeef5"></div>
<div class="a" style="left:11px;top:530px;width:62px;height:31px;background:#fff;border:1px solid #dcdfe6;border-radius:3px;color:#606266;font-size:13.2px;font-weight:bold;line-height:31px;text-align:center">重置</div>
<div class="a" style="left:88px;top:530px;width:61px;height:31px;background:#409eff;border-radius:3px;color:#fff;font-size:13.2px;font-weight:bold;line-height:33px;text-align:center">编辑</div>
<div class="a" style="left:165px;top:530px;width:61px;height:31px;background:#fff;border:1px solid #dcdfe6;border-radius:3px;color:#606266;font-size:13.2px;font-weight:bold;line-height:31px;text-align:center">停用</div>
<div class="a" style="left:0;top:574px;width:330px;height:1px;background:#ebeef5"></div>
<div class="a" style="left:11px;top:588px;width:62px;height:31px;background:#fff;border:1px solid #dcdfe6;border-radius:3px;color:#606266;font-size:13.2px;font-weight:bold;line-height:31px;text-align:center">重置</div>
<div class="a" style="left:88px;top:588px;width:61px;height:31px;background:#409eff;border-radius:3px;color:#fff;font-size:13.2px;font-weight:bold;line-height:33px;text-align:center">编辑</div>
<div class="a" style="left:165px;top:588px;width:61px;height:31px;background:#fff;border:1px solid #dcdfe6;border-radius:3px;color:#606266;font-size:13.2px;font-weight:bold;line-height:31px;text-align:center">停用</div>
<div class="a" style="left:0;top:632px;width:330px;height:1px;background:#ebeef5"></div>
<div class="a" style="left:11px;top:646px;width:62px;height:31px;background:#fff;border:1px solid #dcdfe6;border-radius:3px;color:#606266;font-size:13.2px;font-weight:bold;line-height:31px;text-align:center">重置</div>
<div class="a" style="left:88px;top:646px;width:61px;height:31px;background:#409eff;border-radius:3px;color:#fff;font-size:13.2px;font-weight:bold;line-height:33px;text-align:center">编辑</div>
<div class="a" style="left:165px;top:646px;width:61px;height:31px;background:#fff;border:1px solid #dcdfe6;border-radius:3px;color:#606266;font-size:13.2px;font-weight:bold;line-height:31px;text-align:center">停用</div>
<div class="a" style="left:0;top:690px;width:330px;height:1px;background:#ebeef5"></div>
<div class="a" style="left:11px;top:704px;width:62px;height:31px;background:#fff;border:1px solid #dcdfe6;border-radius:3px;color:#606266;font-size:13.2px;font-weight:bold;line-height:31px;text-align:center">重置</div>
<div class="a" style="left:88px;top:704px;width:61px;height:31px;background:#409eff;border-radius:3px;color:#fff;font-size:13.2px;font-weight:bold;line-height:33px;text-align:center">编辑</div>
<div class="a" style="left:165px;top:704px;width:61px;height:31px;background:#fff;border:1px solid #dcdfe6;border-radius:3px;color:#606266;font-size:13.2px;font-weight:bold;line-height:31px;text-align:center">停用</div>
<div class="a" style="left:0;top:748px;width:330px;height:1px;background:#ebeef5"></div>
</div>
<div class="a" style="left:0;top:725px;width:1483px;height:8px;background:#fff"></div>
<div class="a" style="left:1144px;top:725px;width:339px;height:8px;background:#f7f7f7"></div>
<div class="a" style="left:0;top:725px;width:1122px;height:8px;background:#d9d9d9;border-radius:4px"></div>
<div class="a" style="left:1474px;top:52px;width:9px;height:681px;background:#f7f7f7"></div>
<div class="a" style="left:1474px;top:53px;width:9px;height:388px;background:#d9d9d9;border-radius:4px"></div>
</div>
<div class="a" style="left:440px;top:881px;width:61px;height:35px;background:#fff;border:1px solid #dcdfe6;border-radius:3px;color:#606266;font-size:13.2px;font-weight:bold;line-height:33px;text-align:center">取消</div>
<div class="a" style="left:517px;top:881px;width:114px;height:35px;background:#409eff;border-radius:3px;color:#fff;font-size:13.2px;font-weight:bold;line-height:35px;text-align:center">批量修改部门</div>
<div class="a" style="left:646px;top:881px;width:114px;height:35px;background:#409eff;border-radius:3px;color:#fff;font-size:13.2px;font-weight:bold;line-height:35px;text-align:center">批量修改角色</div>
<div class="a" style="left:776px;top:881px;width:140px;height:35px;background:#409eff;border-radius:3px;color:#fff;font-size:13.2px;font-weight:bold;line-height:35px;text-align:center">修正工时所属部门</div>
<div class="a" style="left:932px;top:881px;width:114px;height:35px;background:#409eff;border-radius:3px;color:#fff;font-size:13.2px;font-weight:bold;line-height:35px;text-align:center">批量启用员工</div>
<div class="a" style="left:1061px;top:881px;width:114px;height:35px;background:#409eff;border-radius:3px;color:#fff;font-size:13.2px;font-weight:bold;line-height:35px;text-align:center">批量修改分组</div>
<div class="a" style="left:581px;top:909px;width:42px;height:30px;background:#f2f6fa;border-radius:4px;box-shadow:0 2px 6px rgba(0,0,0,.12)"></div>
<div class="t" style="left:590px;top:918px;font-size:12.1px;line-height:12.1px;color:#303133;">开始</div>
<div class="t" style="left:1302px;top:892px;font-size:14.3px;line-height:14.3px;color:#606266;">共 148 条</div>
<div class="a" style="left:1380px;top:883px;width:108px;height:31px;background:#fff;border:1px solid #dcdfe6;border-radius:3px"></div>
<div class="t" style="left:1399px;top:893px;font-size:14.3px;line-height:14.3px;color:#606266;">20条/页</div>
<svg class="a" style="left:1469px;top:896px" width="12" height="9" viewBox="0 0 12 9"><path d="M1 2 L6 7 L11 2" fill="none" stroke="#c0c4cc" stroke-width="1.1"/></svg>
<div class="a" style="left:1505px;top:883px;width:391px;height:31px;background:#fff"></div>
<svg class="a" style="left:1516px;top:892px" width="9" height="13" viewBox="0 0 9 13"><path d="M7 1.5 L2 6.5 L7 11.5" fill="none" stroke="#c0c4cc" stroke-width="1.5"/></svg>
<svg class="a" style="left:1788px;top:896px" width="20" height="8" viewBox="0 0 20 8"><g fill="#303133"><circle cx="4.3" cy="4" r="1.4"/><circle cx="9.2" cy="4" r="1.4"/><circle cx="14.1" cy="4" r="1.4"/></g></svg>
<div class="t" style="left:1544.0px;top:891px;width:40px;text-align:center;font-size:14px;line-height:14px;font-weight:bold;color:#409eff">1</div>
<div class="t" style="left:1582.9px;top:891px;width:40px;text-align:center;font-size:14px;line-height:14px;font-weight:bold;color:#303133">2</div>
<div class="t" style="left:1621.8px;top:891px;width:40px;text-align:center;font-size:14px;line-height:14px;font-weight:bold;color:#303133">3</div>
<div class="t" style="left:1660.7px;top:891px;width:40px;text-align:center;font-size:14px;line-height:14px;font-weight:bold;color:#303133">4</div>
<div class="t" style="left:1699.6px;top:891px;width:40px;text-align:center;font-size:14px;line-height:14px;font-weight:bold;color:#303133">5</div>
<div class="t" style="left:1738.5px;top:891px;width:40px;text-align:center;font-size:14px;line-height:14px;font-weight:bold;color:#303133">6</div>
<div class="t" style="left:1777.4px;top:891px;width:40px;text-align:center;font-size:14px;line-height:14px;font-weight:bold;color:#303133"></div>
<div class="t" style="left:1816.3px;top:891px;width:40px;text-align:center;font-size:14px;line-height:14px;font-weight:bold;color:#303133">8</div>
<svg class="a" style="left:1875px;top:892px" width="9" height="13" viewBox="0 0 9 13"><path d="M2 1.5 L7 6.5 L2 11.5" fill="none" stroke="#303133" stroke-width="1.5"/></svg>
<svg class="a" style="left:1900px;top:936px" width="12" height="12" viewBox="0 0 12 12"><path d="M12 3 A9 9 0 0 1 3 12 H12 Z" fill="#f3f3f3"/><path d="M11.7 3.5 A9 9 0 0 1 3.5 11.8" fill="none" stroke="#d0d0d0" stroke-width="1"/></svg>
</body></html>
